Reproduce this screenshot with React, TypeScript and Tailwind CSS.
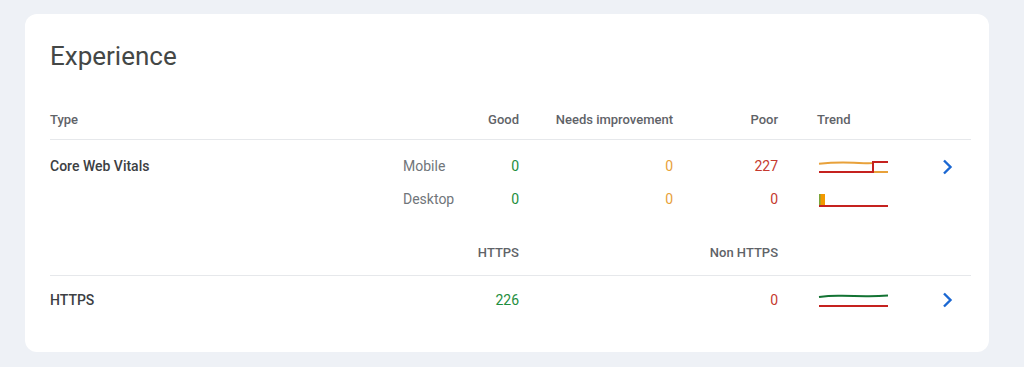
import React from "react";

const ORANGE = "#e8a13a";
const RED = "#c5221f";

function Chevron() {
  return (
    <svg width="12" height="16" viewBox="0 0 12 16" className="block">
      <path d="M3 1.5 9.5 8 3 14.5" fill="none" stroke="#1a67d2" strokeWidth="2.4" />
    </svg>
  );
}

function MobileTrend() {
  return (
    <svg width="72" height="16" viewBox="0 0 72 16" className="block">
      <path d="M1 4.8 Q 18 3 36 3.8 T 55 4" fill="none" stroke={ORANGE} strokeWidth="2" />
      <path d="M55 13 H70" fill="none" stroke={ORANGE} strokeWidth="2" />
      <path d="M1 13 H55 V3 H70" fill="none" stroke={RED} strokeWidth="2" />
    </svg>
  );
}

function DesktopTrend() {
  return (
    <svg width="72" height="16" viewBox="0 0 72 16" className="block">
      <rect x="1" y="2" width="6" height="12" fill="#f29900" />
      <rect x="1" y="2" width="1.5" height="12" fill="#7da53a" />
      <path d="M1 14 H70" fill="none" stroke={RED} strokeWidth="2" />
    </svg>
  );
}

function HttpsTrend() {
  return (
    <svg width="72" height="16" viewBox="0 0 72 16" className="block">
      <path d="M1 5 Q 12 3.5 24 3.8 T 48 4.2 T 70 3.6" fill="none" stroke="#137333" strokeWidth="2" />
      <path d="M1 14 H70" fill="none" stroke={RED} strokeWidth="2" />
    </svg>
  );
}

const cols = "grid grid-cols-[353px_80px_36px_154px_105px_149px_44px] items-center";
const right = "flex justify-end whitespace-nowrap";

export default function App() {
  return (
    <div className="min-h-[367px] bg-[#eef1f6] pl-[25px] pr-[35px] pt-[14px] pb-[15px]" style={{ fontFamily: "Roboto, 'Noto Sans', sans-serif" }}>
      <div className="rounded-[12px] bg-white pl-[25px] pr-[18px] pt-[26px] pb-[36px]">
        <h2 className="text-[26px] leading-[32px] font-normal text-[#444746]">Experience</h2>

        <div className={`${cols} mt-[28px] h-[40px] border-b border-[#e6e8eb] text-[13px] font-medium text-[#5f6368]`}>
          <div>Type</div>
          <div />
          <div className={right}>Good</div>
          <div className={right}>Needs improvement</div>
          <div className={right}>Poor</div>
          <div className="pl-[39px]">Trend</div>
          <div />
        </div>

        <div className="pt-[10px] text-[14px]">
          <div className={`${cols} h-[33px]`}>
            <div className="font-medium text-[#3c4043]">Core Web Vitals</div>
            <div className="text-[#70757a]">Mobile</div>
            <div className={`${right} text-[#1e8e3e]`}>0</div>
            <div className={`${right} text-[#e8a13a]`}>0</div>
            <div className={`${right} text-[#c5392f]`}>227</div>
            <div className="pl-[40px]"><MobileTrend /></div>
            <div className="pl-[14px]"><Chevron /></div>
          </div>
          <div className={`${cols} h-[33px]`}>
            <div />
            <div className="text-[#70757a]">Desktop</div>
            <div className={`${right} text-[#1e8e3e]`}>0</div>
            <div className={`${right} text-[#e8a13a]`}>0</div>
            <div className={`${right} text-[#c5392f]`}>0</div>
            <div className="pl-[40px]"><DesktopTrend /></div>
            <div />
          </div>
        </div>

        <div className={`${cols} items-end h-[60px] pb-[14px] border-b border-[#e6e8eb] text-[13px] leading-[16px] font-medium text-[#5f6368]`}>
          <div />
          <div />
          <div className={right}>HTTPS</div>
          <div className={`col-span-2 ${right}`}>Non HTTPS</div>
          <div />
          <div />
        </div>

        <div className={`${cols} mt-[8px] h-[32px] text-[14px]`}>
          <div className="font-medium text-[#3c4043]">HTTPS</div>
          <div />
          <div className={`${right} text-[#1e8e3e]`}>226</div>
          <div className={`col-span-2 ${right} text-[#c5392f]`}>0</div>
          <div className="pl-[40px]"><HttpsTrend /></div>
          <div className="pl-[14px]"><Chevron /></div>
        </div>
      </div>
    </div>
  );
}
